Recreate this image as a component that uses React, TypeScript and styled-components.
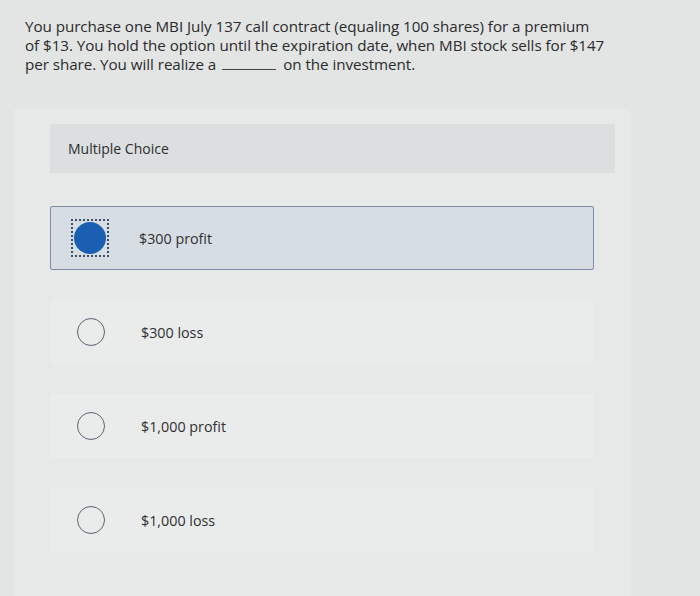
import React from "react";
import styled, { createGlobalStyle } from "styled-components";

const Global = createGlobalStyle`
  html, body { margin: 0; padding: 0; }
  body {
    background: #e3e5e5;
    font-family: "Open Sans", "Liberation Sans", sans-serif;
    color: #2a2a2c;
    width: 700px;
    height: 596px;
    overflow: hidden;
  }
`;

const Page = styled.div`
  display: flex;
  flex-direction: column;
  height: 596px;
`;

const Question = styled.p`
  margin: 0;
  padding: 17px 0 0 25px;
  width: 640px;
  font-size: 15.2px;
  line-height: 19px;
  letter-spacing: -0.05px;
`;

const Blank = styled.span`
  display: inline-block;
  width: 54px;
  height: 1px;
  background: #444;
  margin: 0 7px 0 6px;
  vertical-align: baseline;
`;

const Card = styled.section`
  flex: 1;
  margin: 35px 70px 0 14px;
  padding: 15px 0 0 36px;
  background: #e7e9e9;
  display: flex;
  flex-direction: column;
`;

const Header = styled.div`
  height: 49px;
  display: flex;
  align-items: center;
  padding-left: 18px;
  margin-right: 15px;
  background: #dcdfdf;
  font-size: 14px;
  color: #2e2e30;
`;

const List = styled.div`
  display: flex;
  flex-direction: column;
  gap: 30px;
  margin-top: 33px;
  margin-right: 36px;
`;

const Option = styled.div<{ $selected?: boolean }>`
  height: 64px;
  box-sizing: border-box;
  display: flex;
  align-items: center;
  padding-left: ${(p) => (p.$selected ? "20px" : "26px")};
  background: ${(p) => (p.$selected ? "#d6dee3" : "#eaecec")};
  border: 1px solid ${(p) => (p.$selected ? "#7d8ca3" : "transparent")};
  border-radius: 2px;
  font-size: 14.3px;
  color: #2f2f31;
`;

const FocusRing = styled.span`
  width: 38px;
  height: 38px;
  box-sizing: border-box;
  border: 2px dotted #3b4f6c;
  display: flex;
  align-items: center;
  justify-content: center;
  margin-right: 30px;
`;

const Filled = styled.span`
  width: 32px;
  height: 32px;
  border-radius: 50%;
  background: #1b5fb3;
`;

const Circle = styled.span`
  width: 28px;
  height: 28px;
  box-sizing: border-box;
  border-radius: 50%;
  border: 1.6px solid #5e6273;
  margin-right: 36px;
`;

const options = ["$300 profit", "$300 loss", "$1,000 profit", "$1,000 loss"];

export default function App() {
  return (
    <Page>
      <Global />
      <Question>
        You purchase one MBI July 137 call contract (equaling 100 shares) for a premium
        <br />
        of $13. You hold the option until the expiration date, when MBI stock sells for $147
        <br />
        per share. You will realize a<Blank />on the investment.
      </Question>
      <Card>
        <Header>Multiple Choice</Header>
        <List>
          {options.map((o, i) =>
            i === 0 ? (
              <Option key={o} $selected>
                <FocusRing>
                  <Filled />
                </FocusRing>
                {o}
              </Option>
            ) : (
              <Option key={o}>
                <Circle />
                {o}
              </Option>
            )
          )}
        </List>
      </Card>
    </Page>
  );
}
